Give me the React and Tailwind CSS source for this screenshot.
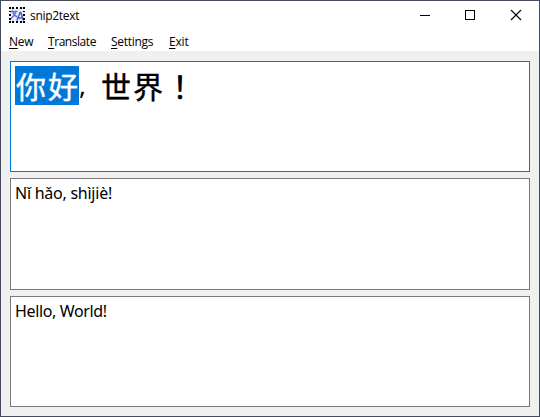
import React from 'react';

const menuItems = [
  { label: 'New', width: 'w-[39px]', spacing: 'tracking-[-0.25px]' },
  { label: 'Translate', width: 'w-[63px]', spacing: 'tracking-[-0.45px]' },
  { label: 'Settings', width: 'w-[58px]', spacing: 'tracking-[-0.3px]' },
  { label: 'Exit', width: 'w-[30px]', spacing: 'tracking-[-0.2px]' },
];

function AppIcon() {
  return (
    <svg className="h-4 w-4 shrink-0" viewBox="0 0 16 16" fill="none">
      <rect x="1" y="1" width="14" height="14" fill="#e9ebf8" />
      <path d="M1.500 4.500h7M3 3.500c1 3 2.500 5 5 6.500M7 4.500c-1 3.500-3 5.500-5.500 7.500" stroke="#6676d0" strokeWidth="1.5" />
      <path d="M8 13.500 11 5.500h.8l2.700 8M9 11h5" stroke="#4c5dc0" strokeWidth="1.500" />
      <path d="M0 0h2v2H0zM3 0h2v2H3zM7 0h2v2H7zM11 0h2v2h-2zM14 0h2v2h-2zM0 4h2v1H0zM0 7h2v2H0zM0 11h2v2H0zM14 4h2v1h-2zM14 7h2v2h-2zM14 11h2v2h-2zM0 14h2v2H0zM3 14h2v2H3zM7 14h2v2H7zM11 14h2v2h-2zM14 14h2v2h-2z" fill="#000" shapeRendering="crispEdges" />
    </svg>
  );
}

function WindowControls() {
  return (
    <div className="ml-auto flex h-[29px]">
      <svg className="h-[29px] w-[45px]" viewBox="0 0 45 29" shapeRendering="crispEdges">
        <path d="M18 14.5h10" stroke="#000" />
      </svg>
      <svg className="h-[29px] w-[46px]" viewBox="0 0 46 29" fill="none" shapeRendering="crispEdges">
        <rect x="18.5" y="9.5" width="9" height="9" stroke="#000" />
      </svg>
      <svg className="h-[29px] w-[46px]" viewBox="0 0 46 29">
        <path d="m18 9 10 10M28 9 18 19" stroke="#000" strokeWidth="1.1" />
      </svg>
    </div>
  );
}

export default function App() {
  return (
    <div className="flex h-[417px] w-[540px] flex-col overflow-hidden border border-[#474b5f] bg-[#f0f0f0] text-black">
      <header className="flex h-[30px] shrink-0 bg-white font-['Open_Sans',sans-serif] text-[12px]">
        <div className="flex pl-2 pt-[6px]">
          <AppIcon />
          <span className="ml-[5px] leading-[17px] tracking-[-0.3px]">snip2text</span>
        </div>
        <WindowControls />
      </header>
      <nav className="flex h-5 shrink-0 bg-white pl-2 font-['Open_Sans',sans-serif] text-[12px] leading-[22px]">
        {menuItems.map(({ label, width, spacing }) => (
          <span key={label} className={`${width} ${spacing} whitespace-nowrap`}>
            <span className="underline underline-offset-2">{label[0]}</span>
            {label.slice(1)}
          </span>
        ))}
      </nav>
      <main className="flex flex-col gap-[6px] px-[9px] pt-[10px] font-['Noto_Sans',sans-serif] text-[16px] leading-[22px]">
        <section className="flex h-[111px] items-start whitespace-nowrap border border-[#0078d7] bg-white pl-1 pt-1 font-['Noto_Sans_CJK_SC',sans-serif] text-[30px] leading-[39px] tracking-[2px]">
          <span className="h-[39px] w-[64px] shrink-0 bg-[#0078d7] pl-px text-white [-webkit-text-stroke:0.4px_white]">你好</span>
          <span className="w-[21px] shrink-0 font-['Noto_Sans',sans-serif] text-[26px]">,</span>
          <span className="pl-px [-webkit-text-stroke:0.4px_black]">世界</span>
          <span className="font-['Noto_Sans_CJK_TC',sans-serif] [-webkit-text-stroke:0.6px_black]" lang="zh-Hant">！</span>
        </section>
        <section className="h-[112px] border border-[#7a7a7a] bg-white pl-1 pt-[3px] tracking-[-0.25px]">Nǐ hǎo, shìjiè!</section>
        <section className="h-[111px] border border-[#7a7a7a] bg-white pl-1 pt-[3px] tracking-[-0.36px]">Hello, World!</section>
      </main>
    </div>
  );
}
